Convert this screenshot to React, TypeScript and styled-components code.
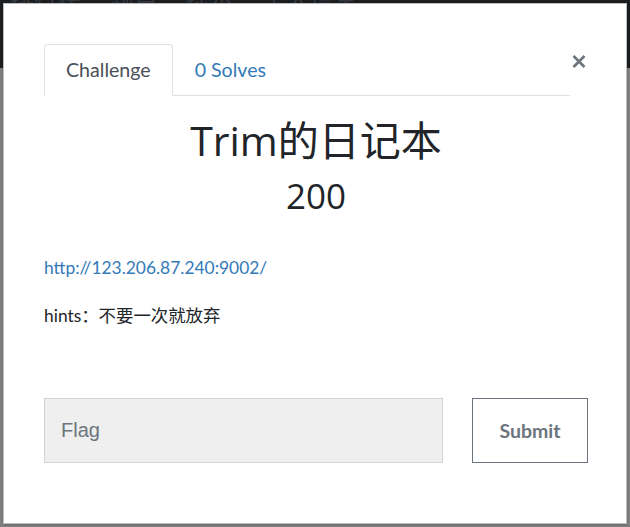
import React from "react";
import styled, { createGlobalStyle } from "styled-components";

const GlobalStyle = createGlobalStyle`
  html, body { margin: 0; padding: 0; }
  body {
    background: #7f7f7f;
    font-family: "Lato", "Noto Sans CJK SC", sans-serif;
    color: #212529;
    width: 630px;
    height: 527px;
    overflow: hidden;
  }
  * { box-sizing: border-box; }
`;

const Page = styled.div`
  position: relative;
  width: 630px;
  height: 527px;
  display: flex;
  flex-direction: column;
`;

const NavBar = styled.div`
  height: 68px;
  background: #1b1e21;
  display: flex;
  align-items: flex-start;
  gap: 28px;
  padding: 0 0 0 10px;
  overflow: hidden;
`;

const NavText = styled.span`
  color: #33373c;
  font-size: 24px;
  line-height: 24px;
  margin-top: -14px;
  font-family: "Noto Sans CJK SC", sans-serif;
`;

const Backdrop = styled.div`
  flex: 1;
  background: #7f7f7f;
`;

const Modal = styled.div`
  position: absolute;
  left: 3px;
  top: 3px;
  width: 624px;
  height: 521px;
  background: #fff;
  border: 1px solid rgba(0, 0, 0, 0.25);
  box-shadow: 0 1px 2px rgba(0, 0, 0, 0.2);
  padding: 40px 38px 0 40px;
  display: flex;
  flex-direction: column;
`;

const HeaderRow = styled.div`
  display: flex;
  align-items: flex-start;
`;

const Tabs = styled.div`
  flex: 1;
  display: flex;
  border-bottom: 1px solid #dee2e6;
`;

const Tab = styled.div<{ $active?: boolean }>`
  font-size: 19.6px;
  line-height: 27px;
  padding: 11px 21px 12px;
  margin-bottom: -1px;
  border: 1px solid ${(p) => (p.$active ? "#dee2e6" : "transparent")};
  border-bottom-color: ${(p) => (p.$active ? "#fff" : "transparent")};
  border-radius: 4px 4px 0 0;
  color: ${(p) => (p.$active ? "#495057" : "#337ab7")};
  background: ${(p) => (p.$active ? "#fff" : "transparent")};
`;

const CloseButton = styled.button`
  width: 18px;
  height: 28px;
  padding: 0;
  margin-top: 11px;
  border: none;
  background: transparent;
  display: flex;
  align-items: flex-start;
  justify-content: center;
  cursor: pointer;
`;

const Title = styled.h2`
  margin: 20px 0 0;
  text-align: center;
  font-family: "Open Sans", "Noto Sans CJK SC", sans-serif;
  font-size: 41px;
  line-height: 48px;
  font-weight: 400;
  color: #212529;
`;

const Value = styled.h3`
  margin: 10px 0 0;
  text-align: center;
  font-family: "Open Sans", "Noto Sans CJK SC", sans-serif;
  font-size: 35px;
  line-height: 43px;
  font-weight: 400;
  color: #212529;
`;

const Description = styled.div`
  margin-top: 38px;
  font-size: 17.4px;
  line-height: 26px;
`;

const Para = styled.p`
  margin: 0 0 22px;
`;

const Link = styled.a`
  color: #337ab7;
  text-decoration: none;
`;

const SubmitRow = styled.div`
  margin-top: 47px;
  display: grid;
  grid-template-columns: 1fr 116px;
  gap: 29px;
`;

const FlagInput = styled.input`
  height: 65px;
  border: 1px solid #ced4da;
  background: #efefef;
  padding: 0 16px;
  font-family: "Liberation Sans", Arial, sans-serif;
  font-size: 20px;
  color: #495057;
  outline: none;
  &::placeholder {
    color: #6c757d;
  }
`;

const SubmitButton = styled.button`
  height: 65px;
  border: 1px solid #6c757d;
  background: #fff;
  color: #6c757d;
  font-family: "Lato", sans-serif;
  font-weight: 700;
  font-size: 19.5px;
  cursor: pointer;
`;

export default function App() {
  return (
    <>
      <GlobalStyle />
      <Page>
        <NavBar>
          <NavText>排行榜</NavText>
          <NavText>题目</NavText>
          <NavText>提示</NavText>
          <NavText>个人信息</NavText>
        </NavBar>
        <Backdrop />
        <Modal>
          <HeaderRow>
            <Tabs>
              <Tab $active>Challenge</Tab>
              <Tab>0 Solves</Tab>
            </Tabs>
            <CloseButton aria-label="Close">
              <svg width="14" height="13" viewBox="0 0 14 13">
                <path d="M1.5 1 L12.5 12 M12.5 1 L1.5 12" stroke="#6c757d" strokeWidth="2.6" strokeLinecap="butt" />
              </svg>
            </CloseButton>
          </HeaderRow>
          <Title>Trim的日记本</Title>
          <Value>200</Value>
          <Description>
            <Para>
              <Link href="#">http://123.206.87.240:9002/</Link>
            </Para>
            <Para>hints：不要一次就放弃</Para>
          </Description>
          <SubmitRow>
            <FlagInput placeholder="Flag" />
            <SubmitButton>Submit</SubmitButton>
          </SubmitRow>
        </Modal>
      </Page>
    </>
  );
}
